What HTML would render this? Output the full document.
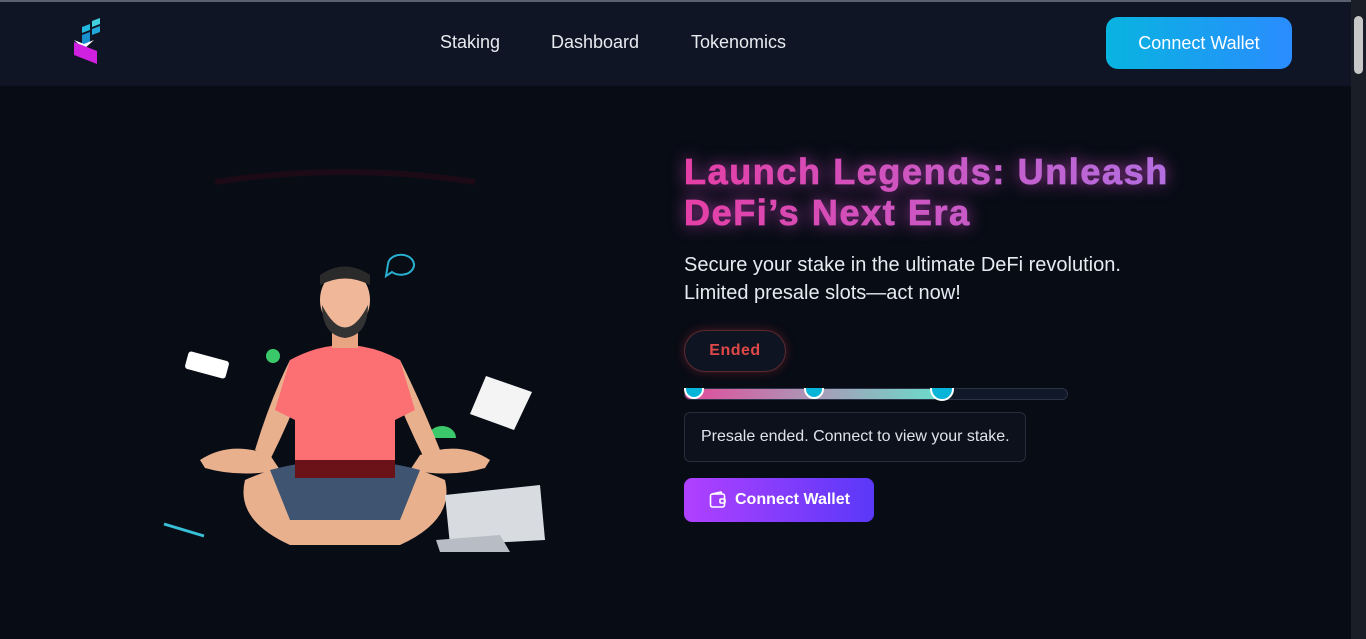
<!DOCTYPE html>
<html><head><meta charset="utf-8"><style>
*{margin:0;padding:0;box-sizing:border-box}
body{width:1366px;height:639px;overflow:hidden;background:#080c15;font-family:"Liberation Sans",sans-serif;position:relative}
.nav{position:absolute;left:0;top:0;width:1351px;height:86px;background:#0f1524;border-top:2px solid #5a6270}
.nav a{position:absolute;top:30px;color:#e8eaf0;font-size:18px;text-decoration:none}
.cw{position:absolute;left:1106px;top:15px;width:186px;height:52px;border-radius:12px;background:linear-gradient(90deg,#08b4e0,#2a8cff);color:#fff;font-size:18px;text-align:center;line-height:52px}
.sb{position:absolute;right:0;top:0;width:15px;height:639px;background:#1a1e26}
.sb div{position:absolute;left:3px;top:16px;width:9px;height:58px;border-radius:5px;background:#c8c8c8}
h1{position:absolute;left:684px;top:151px;font-size:36px;line-height:41px;font-weight:bold;letter-spacing:1.6px;-webkit-text-stroke:0.8px transparent;background:linear-gradient(90deg,#e53fa6,#b36ee0);-webkit-background-clip:text;color:transparent;filter:drop-shadow(0 0 8px rgba(210,70,200,.7));white-space:nowrap}
.sub{position:absolute;left:684px;top:251px;color:#e8eaf2;font-size:20px;line-height:28px}
.ended{position:absolute;left:684px;top:330px;width:102px;height:42px;border-radius:21px;border:1px solid #5a2a30;background:#0e1422;box-shadow:0 0 10px rgba(200,50,60,.35);color:#e04848;font-weight:bold;font-size:16px;text-align:center;line-height:40px;letter-spacing:.5px}
.bar{position:absolute;left:684px;top:388px;width:384px;height:12px;border-radius:6px;background:#111827;border:1px solid #2a3446;overflow:hidden}
.fill{position:absolute;left:0;top:0;height:12px;width:262px;background:linear-gradient(90deg,#e24a9a,#a99ab8,#66e0cc)}
.dot{position:absolute;top:379px;width:20px;height:20px;border-radius:50%;background:#08b4d8;border:2px solid #fff;clip-path:inset(9px 0 0 0)}
.box{position:absolute;left:684px;top:412px;width:342px;height:50px;border:1px solid #262e3c;border-radius:6px;background:#0c111c;color:#e0e3ea;font-size:16px;line-height:48px;padding-left:16px}
.btn{position:absolute;left:684px;top:478px;width:190px;height:44px;border-radius:8px;background:linear-gradient(90deg,#b040ff,#5a38f8);color:#fff;font-weight:bold;font-size:16px;line-height:44px;padding-left:51px}
</style></head><body>
<div class="nav">
<svg style="position:absolute;left:72px;top:14px" width="36" height="50" viewBox="0 0 36 50"><polygon points="10,11 18,8 18,14 10,17" fill="#22b8e0"/><polygon points="20,5 28,2 28,8 20,11" fill="#40d0e0"/><polygon points="20,13 28,10 28,16 20,19" fill="#20a8d8"/><polygon points="10,19 18,16 18,26 10,29" fill="#1890d0"/><polygon points="2,24 12,28 22,24 12,33" fill="#fff"/><polygon points="2,26 25,35 25,48 2,39" fill="#d020e0"/></svg>
<a style="left:440px">Staking</a><a style="left:551px">Dashboard</a><a style="left:691px">Tokenomics</a>
<div class="cw">Connect Wallet</div>
</div>
<div class="sb"><div></div></div>
<svg style="position:absolute;left:150px;top:160px" width="420" height="400" viewBox="150 160 420 400">
<path d="M215 182 Q345 162 475 182" stroke="#2a0c18" stroke-width="6" fill="none" opacity=".6"/>
<rect x="186" y="356" width="42" height="18" rx="3" fill="#fff" transform="rotate(15 207 365)"/>
<circle cx="273" cy="356" r="7" fill="#3ac86a"/>
<path d="M388 264 a13 10 0 1 1 4 8 l-6 4z" fill="none" stroke="#28b0d0" stroke-width="2"/>
<polygon points="486,376 532,392 514,430 470,414" fill="#f4f4f4"/>
<path d="M428 438 a14 12 0 0 1 28 0z" fill="#3ac86a"/>
<line x1="164" y1="524" x2="204" y2="536" stroke="#38c0d8" stroke-width="3"/>
<path d="M200 460 Q230 440 270 455 L280 470 Q240 478 205 468z" fill="#e9b08e"/>
<path d="M490 460 Q460 440 420 455 L410 470 Q450 478 485 468z" fill="#e9b08e"/>
<path d="M290 360 Q270 400 255 450 L270 460 Q290 420 305 380z" fill="#e9b08e"/>
<path d="M400 360 Q420 400 440 450 L425 460 Q405 420 390 380z" fill="#e9b08e"/>
<path d="M245 480 Q300 455 345 470 Q390 455 445 480 Q455 520 400 545 L290 545 Q235 520 245 480z" fill="#e9b08e"/>
<path d="M270 470 Q345 450 420 470 L400 520 L290 520z" fill="#3e5470"/>
<path d="M290 360 Q345 330 400 360 L415 410 L395 420 L395 475 L295 475 L295 420 L275 410z" fill="#fc6f72"/>
<path d="M295 460 L395 460 L395 478 L295 478z" fill="#6a1218"/>
<rect x="332" y="320" width="26" height="28" fill="#e9a482"/>
<ellipse cx="345" cy="300" rx="25" ry="30" fill="#f0b898"/>
<path d="M320 275 Q345 258 370 275 L370 285 Q345 272 320 285z" fill="#2a2a2a"/>
<path d="M322 305 Q345 350 368 305 Q368 335 345 338 Q322 335 322 305z" fill="#333"/>
<polygon points="445,495 540,485 545,540 450,545" fill="#d8dbe0"/>
<polygon points="436,540 500,535 510,552 440,552" fill="#b8bcc4"/>
</svg>
<h1>Launch Legends: Unleash<br>DeFi’s Next Era</h1>
<div class="sub">Secure your stake in the ultimate DeFi revolution.<br>Limited presale slots—act now!</div>
<div class="ended">Ended</div>
<div class="bar"><div class="fill"></div></div>
<div class="dot" style="left:684px"></div><div class="dot" style="left:804px"></div><div class="dot" style="left:930px;width:24px;height:24px;top:377px;clip-path:inset(11px 0 0 0)"></div>
<div class="box">Presale ended. Connect to view your stake.</div>
<div class="btn"><svg style="position:absolute;left:25px;top:13px" width="18" height="18" viewBox="0 0 18 18" fill="none" stroke="#fff" stroke-width="1.6"><rect x="1.5" y="3" width="14" height="13" rx="2"/><path d="M3 3 L12 1 L13 3"/><rect x="11" y="8" width="5" height="4" rx="1"/></svg>Connect Wallet</div>
</body></html>
